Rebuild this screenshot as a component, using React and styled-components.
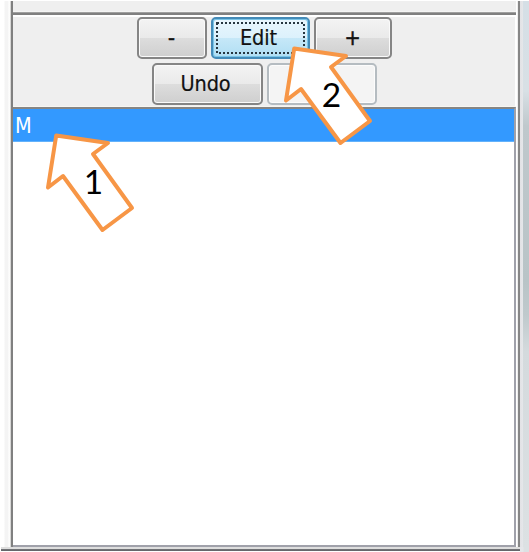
import React from "react";
import styled, { createGlobalStyle, css } from "styled-components";

const GlobalStyle = createGlobalStyle`
  * { box-sizing: border-box; }
  body { margin: 0; background: #fff; overflow: hidden; }
`;

const Window = styled.main`
  position: relative;
  width: 529px;
  height: 552px;
  padding-top: 1px;
  display: flex;
  flex-direction: column;
  background: #fff;
  font-family: "DejaVu Sans Condensed", "DejaVu Sans", sans-serif;
  overflow: hidden;
`;

const Body = styled.div`
  height: 546px;
  display: flex;
`;

const LeftEdge = styled.div`
  width: 13px;
  flex: none;
  background: linear-gradient(90deg, #fff 4px, #f4f4f4 5px, #f4f4f4 8px, #fff 9px, #fafaf8 10px, #b5b5b5 11px, #808080 11px);
`;

const Panel = styled.section`
  width: 504px;
  flex: none;
  display: flex;
  flex-direction: column;
`;

const TopStrip = styled.div`
  height: 16px;
  flex: none;
  margin-right: 1px;
  background: linear-gradient(180deg, #efefef 10px, #fafaf8 11px, #a0a0a0 11px, #a0a0a0 12px, #808080 12px, #808080 14px, #fff 14px);
`;

const Toolbar = styled.div`
  height: 90px;
  flex: none;
  display: flex;
  flex-direction: column;
  align-items: center;
  gap: 4px;
  background: #efefef;
  border-right: 2px solid #fff;
`;

const ButtonRow = styled.div`
  display: flex;
  gap: 4px;
  height: 42px;
`;

const looks = {
  normal: css`
    border-color: #858585;
    background: linear-gradient(180deg, #f3f3f3 0, #eaeaea 49%, #dddddd 50%, #cfcfcf 100%);
    box-shadow: inset 0 0 0 1px #fafafa;
  `,
  active: css`
    border-color: #448bb8;
    background: linear-gradient(180deg, #e9f6fd 0, #dcf1fc 49%, #c6e8f8 50%, #b0def3 100%);
    box-shadow: inset 0 0 0 1px #78c5e8;
  `,
  disabled: css`
    border-color: #b5bcc1;
    background: #f4f4f4;
    box-shadow: inset 0 0 0 1px #fcfcfc;
  `,
};

const Button = styled.button`
  position: relative;
  width: ${(p) => p.$width}px;
  height: 42px;
  flex: none;
  padding: 0 ${(p) => (p.$symbol ? 0 : 3)}px 0 0;
  border: 2px solid;
  border-radius: 5px;
  color: #111;
  font: 21.5px/24px "DejaVu Sans Condensed", "DejaVu Sans", sans-serif;
  letter-spacing: -0.1px;
  -webkit-text-stroke: ${(p) => (p.$symbol ? "0.5px" : "0.2px")} #111;
  ${(p) => looks[p.$look || "normal"]}
`;

const FocusRing = styled.svg`
  position: absolute;
  inset: 2px;
  width: 91px;
  height: 34px;
`;

const ListBox = styled.div`
  flex: 1;
  margin-right: 1px;
  border-top: 2px solid #858585;
  border-right: 2px solid #a0a1aa;
  border-bottom: 2px solid #a0a1aa;
  background: #fff;
  box-shadow: 0 -1px #f8f6f1;
`;

const ListItem = styled.div`
  height: 33px;
  padding: 1px 0 0 2px;
  background: #3399ff;
  border-bottom: 1px solid #63b2fb;
  color: #fff;
  font: 21.5px/31px "DejaVu Sans Condensed", "DejaVu Sans", sans-serif;
`;

const RightEdge = styled.div`
  flex: 1;
  background:
    linear-gradient(90deg, #eeeeee 1px, #888 1px, #858585 3px, #e2e2e5 3px, #e5e7ea 6px, transparent 6px),
    linear-gradient(180deg, #d5dfe6 0, #d8e0e5 90px, #bfc8cc 125px, #b9c4c7 280px, #c0cacd 315px, #d4dadd 350px, #dce1e3 100%);
`;

const BottomEdge = styled.div`
  height: 5px;
  display: flex;
  background: #fff;
`;

const BottomRule = styled.div`
  width: 519px;
  height: 4px;
  margin-left: 1px;
  background: linear-gradient(180deg, #dedede 2px, #77787b 2px, #606266 4px);
`;

const BottomCorner = styled.div`
  flex: 1;
  background: linear-gradient(90deg, #e5e7ea 3px, #dce1e3 4px);
`;

const Annotation = styled.svg`
  position: absolute;
  left: ${(p) => p.$x}px;
  top: ${(p) => p.$y}px;
  width: 92px;
  height: 102px;
  overflow: visible;
  pointer-events: none;
`;

const Numeral = styled.text`
  font: 33.5px Lato, sans-serif;
  fill: #000;
  text-anchor: middle;
`;

function Callout({ x, y, number }) {
  return (
    <Annotation $x={x} $y={y} viewBox="0 0 92 102">
      <path
        d="M11.2 3.5 L63 11 L48 22 L87 76 L57.5 98 L18 44 L3 55.5 Z"
        fill="#fff"
        stroke="#f79646"
        strokeWidth="4"
        strokeLinejoin="round"
      />
      <Numeral x="48.5" y="62">{number}</Numeral>
    </Annotation>
  );
}

export default function App() {
  return (
    <>
      <GlobalStyle />
      <Window>
        <Body>
          <LeftEdge />
          <Panel>
            <TopStrip />
            <Toolbar>
              <ButtonRow>
                <Button $width={70} $symbol>-</Button>
                <Button $width={99} $look="active">
                  Edit
                  <FocusRing viewBox="0 0 91 34">
                    <rect x="2" y="2" width="87" height="30" fill="none" stroke="#263640" strokeWidth="2" strokeDasharray="2 2" />
                  </FocusRing>
                </Button>
                <Button $width={78} $symbol>+</Button>
              </ButtonRow>
              <ButtonRow>
                <Button $width={111}>Undo</Button>
                <Button $width={110} $look="disabled" disabled aria-label="Redo" />
              </ButtonRow>
            </Toolbar>
            <ListBox>
              <ListItem>M</ListItem>
            </ListBox>
          </Panel>
          <RightEdge />
        </Body>
        <BottomEdge>
          <BottomRule />
          <BottomCorner />
        </BottomEdge>
        <Callout x={45} y={132} number="1" />
        <Callout x={282.6} y={44.6} number="2" />
      </Window>
    </>
  );
}
